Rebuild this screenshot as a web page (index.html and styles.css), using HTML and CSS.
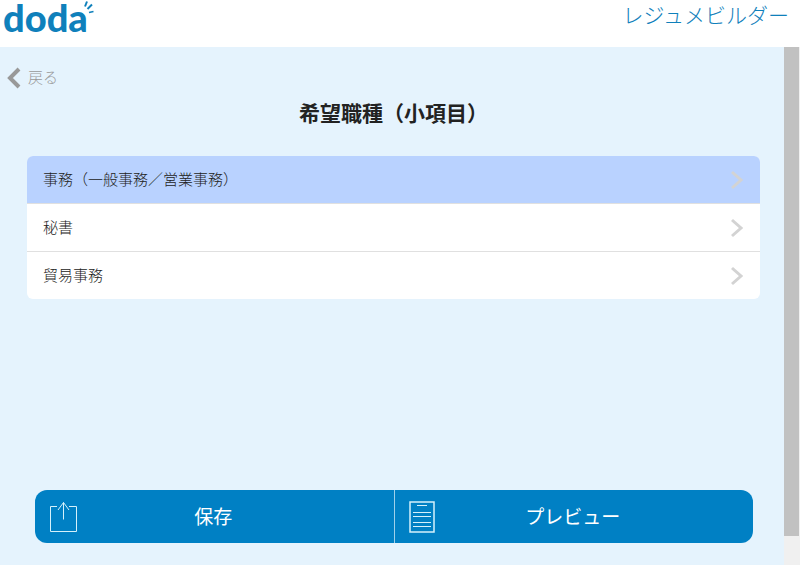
FILE: index.html
```html
<!DOCTYPE html>
<html lang="ja">
<head>
  <meta charset="UTF-8" />
  <meta name="viewport" content="width=device-width, initial-scale=1" />
  <title>doda レジュメビルダー</title>
  <link rel="stylesheet" href="styles.css">
</head>
<body>
  <header class="header">
    <a class="logo" href="#">
      <span class="logo-text">doda</span>
      <svg class="logo-spark" width="10" height="14" viewBox="0 0 10 14" aria-hidden="true">
        <path d="M1 6.5 L3 1.5" stroke-width="2" />
        <path d="M3.5 9 L8 4.5" stroke-width="2" />
        <path d="M5 12.5 L9.5 11.5" stroke-width="1.5" />
      </svg>
    </a>
    <span class="service-name">レジュメビルダー</span>
  </header>

  <div class="viewport">
    <main class="main">
      <a class="back" href="#">
        <svg width="14" height="20" viewBox="0 0 14 20" aria-hidden="true">
          <path d="M12 2 L3 11 L12 20" />
        </svg>
        <span>戻る</span>
      </a>

      <h1 class="title">希望職種（小項目）</h1>

      <ul class="list">
        <li>
          <a class="item selected" href="#">
            <span>事務（一般事務／営業事務）</span>
            <svg width="14" height="20" viewBox="0 0 14 20" aria-hidden="true"><path d="M2 2 L11 10 L2 18" /></svg>
          </a>
        </li>
        <li>
          <a class="item" href="#">
            <span>秘書</span>
            <svg width="14" height="20" viewBox="0 0 14 20" aria-hidden="true"><path d="M2 2 L11 10 L2 18" /></svg>
          </a>
        </li>
        <li>
          <a class="item" href="#">
            <span>貿易事務</span>
            <svg width="14" height="20" viewBox="0 0 14 20" aria-hidden="true"><path d="M2 2 L11 10 L2 18" /></svg>
          </a>
        </li>
      </ul>

      <div class="actions">
        <button class="action" type="button">
          <svg width="28" height="32" viewBox="0 0 28 32" aria-hidden="true">
            <path d="M8 5.5 H1.5 V30.5 H27.5 V5.5 H20" />
            <path d="M14.5 18.5 V1.5 M9 9 L14.5 1.5 L20 9" />
          </svg>
          <span>保存</span>
        </button>
        <button class="action" type="button">
          <svg width="28" height="32" viewBox="0 0 28 32" aria-hidden="true">
            <path d="M1 1 H25 V31 H1 Z" stroke-width="1.5" />
            <path d="M8 4.5 H18 M4 11.5 H22 M4 15.5 H22 M4 21.5 H22 M4 25.5 H22" />
          </svg>
          <span>プレビュー</span>
        </button>
      </div>
    </main>
    <div class="scrollbar"><div class="thumb"></div></div>
  </div>
</body>
</html>
```

FILE: styles.css
```css
* {
  box-sizing: border-box;
}

body {
  margin: 0;
  min-height: 100vh;
  display: flex;
  flex-direction: column;
  background-color: #fff;
  font-family: "Noto Sans CJK JP", sans-serif;
  font-size: 15px;
  font-weight: 300;
  color: #222;
}

a {
  color: inherit;
  text-decoration: none;
}

svg {
  flex: none;
  fill: none;
}

.header {
  height: 47px;
  padding: 0 11px 0 3px;
  display: flex;
  justify-content: space-between;
  color: #0f80bb;
}

.logo {
  display: flex;
}

.logo-text {
  font-family: Lato, sans-serif;
  font-size: 38px;
  font-weight: 900;
  line-height: 34px;
}

.logo-spark {
  margin-left: -4px;
  stroke: #0f80bb;
}

.service-name {
  font-size: 21px;
  line-height: 28px;
}

.viewport {
  flex: 1;
  display: flex;
}

.main {
  flex: 1;
  display: flex;
  flex-direction: column;
  padding: 18px 24px 22px 27px;
  background-color: #e5f3fd;
}

.back {
  display: flex;
  align-items: center;
  align-self: flex-start;
  gap: 7px;
  margin-left: -20px;
  line-height: 24px;
  color: #999;
}

.back svg {
  overflow: visible;
  stroke: #999;
  stroke-width: 4;
}

.title {
  margin: 8px 0 29px;
  font-size: 21px;
  font-weight: 700;
  line-height: 30px;
  text-align: center;
  color: #222;
}

.list {
  margin: 0;
  padding: 0;
  list-style: none;
  border-radius: 6px;
  overflow: hidden;
  background-color: #fff;
}

.list li + li {
  border-top: 1px solid #e0e0e0;
}

.item {
  height: 47px;
  padding: 0 16px;
  display: flex;
  align-items: center;
  justify-content: space-between;
}

.item span {
  padding-bottom: 2px;
}

.item svg {
  stroke: #d3d3d3;
  stroke-width: 3;
}

.item.selected {
  background-color: #b9d2ff;
}

.actions {
  display: flex;
  margin: auto 7px 0 8px;
  border-radius: 12px;
  overflow: hidden;
  background-color: #0080c4;
}

.action {
  flex: 1;
  height: 53px;
  padding: 0 14px;
  display: flex;
  align-items: center;
  border: 0;
  background: none;
  font: inherit;
  font-size: 19px;
  font-weight: 400;
  color: #fff;
  cursor: pointer;
}

.action + .action {
  border-left: 1px solid #9fd0ea;
}

.action svg {
  stroke: #d5f1fb;
}

.action span {
  flex: 1;
  padding: 0 30px 2px 0;
}

.scrollbar {
  width: 16px;
  padding-bottom: 29px;
  display: flex;
  background-color: #f0f0f0;
}

.thumb {
  width: 15px;
  background-color: #c1c1c1;
}
```
